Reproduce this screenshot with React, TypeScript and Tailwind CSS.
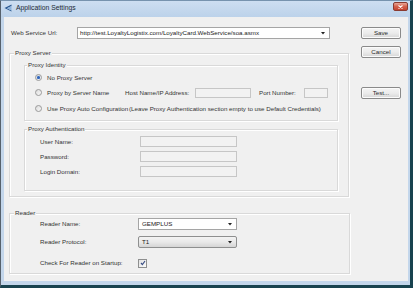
import React from "react";

function Radio({ checked }: { checked?: boolean }) {
  return (
    <span className="w-[7px] h-[7px] rounded-full border border-[#9a9a9a] bg-gradient-to-br from-[#dcdcdc] to-[#f8f8f8] flex items-center justify-center shrink-0">
      {checked ? <span className="w-[3px] h-[3px] rounded-full bg-[#2f63b8] shadow-[0_0_1px_#6a9be0]" /> : null}
    </span>
  );
}

function Box({ w, h }: { w: string; h: string }) {
  return <span className={`${w} ${h} block border border-[#c6c6c6] bg-[#f2f2f2] shrink-0`} />;
}

function Button({ label }: { label: string }) {
  return (
    <div className="w-[40px] h-[12px] rounded-[2px] border border-[#8a8a8a] bg-gradient-to-b from-[#f4f4f4] via-[#ececec] to-[#d6d6d6] flex items-center justify-center text-[#2a2a2a] shadow-[inset_0_0_0_1px_#fbfbfb]">
      {label}
    </div>
  );
}

function Arrow() {
  return (
    <svg width="4" height="3" viewBox="0 0 4 3" className="shrink-0">
      <path d="M0 0 L4 0 L2 2.5 Z" fill="#222" />
    </svg>
  );
}

export default function App() {
  return (
    <div className="w-[413px] h-[288px] flex flex-col bg-[#c3d6eb] border-l border-l-[#56616c] border-r-[3px] border-r-[#18434f] border-b-[3px] border-b-[#18434f] border-t border-t-[#7793ae] font-['Liberation_Sans',Arial,sans-serif] text-[6.2px] leading-[8px] text-[#333] overflow-hidden">
      {/* Title bar */}
      <div className="h-[16px] flex items-start bg-gradient-to-b from-[#cddef1] to-[#bcd2ea] shrink-0">
        <div className="h-[14px] flex items-center pl-[3px]">
          <svg width="8" height="8" viewBox="0 0 8 8" className="shrink-0">
            <path d="M0.5 4 L7.5 0.5 L7.5 2 L3 4.3 L7.5 6.5 L7.5 7.5 Z" fill="#2a5891" />
            <path d="M3 4.3 L7.5 2 L7.5 6.5 Z" fill="#8fb4dc" />
          </svg>
          <span className="ml-[4px] text-[6.8px] text-[#1e2a36]">Application Settings</span>
        </div>
        <div className="ml-auto mr-[2px] mt-[1px] w-[15px] h-[9px] rounded-[2px] border border-[#8a3a30] bg-gradient-to-b from-[#e9a596] via-[#d3614d] to-[#c4412e] flex items-center justify-center">
          <svg width="5" height="4" viewBox="0 0 5 4">
            <path d="M0.5 0.5 L4.5 3.5 M4.5 0.5 L0.5 3.5" stroke="#fff" strokeWidth="1.1" />
          </svg>
        </div>
      </div>

      {/* Client area */}
      <div className="ml-[3px] mr-[2px] h-[264px] bg-[#f0f0f0] flex items-start shrink-0">
        {/* Left column */}
        <div className="pl-[5px] flex flex-col">
          <div className="mt-[10px] h-[12px] flex items-center">
            <span className="pl-[2px] w-[68px] whitespace-nowrap">Web Service Url:</span>
            <div className="w-[253px] h-[12px] border border-[#a5a5a5] bg-white flex items-center pl-[2px] pr-[4px]">
              <span className="whitespace-nowrap text-[#1a1a1a]">http://test.LoyaltyLogistix.com/LoyaltyCard.WebService/soa.asmx</span>
              <span className="ml-auto">
                <Arrow />
              </span>
            </div>
          </div>

          {/* Proxy Server */}
          <fieldset className="mt-[10px] w-[340px] border border-[#d9d9d9] shadow-[inset_1px_1px_0_#ffffff,1px_1px_0_#ffffff]">
            <legend className="ml-[4px] px-[1px] leading-[8px] bg-[#f0f0f0]">Proxy Server</legend>
            <div className="pl-[14px] pb-[5px]">
              {/* Proxy Identity */}
              <fieldset className="mt-[4px] w-[314px] border border-[#d9d9d9] shadow-[inset_1px_1px_0_#ffffff,1px_1px_0_#ffffff]">
                <legend className="ml-[2px] px-[1px] leading-[8px] bg-[#f0f0f0]">Proxy Identity</legend>
                <div className="pl-[10px] pb-[6px]">
                  <div className="mt-[3px] h-[11px] flex items-center whitespace-nowrap">
                    <Radio checked />
                    <span className="ml-[5px]">No Proxy Server</span>
                  </div>
                  <div className="mt-[4px] h-[11px] flex items-center whitespace-nowrap">
                    <Radio />
                    <span className="ml-[5px] w-[78px]">Proxy by Server Name</span>
                    <span className="w-[70px]">Host Name/IP Address:</span>
                    <Box w="w-[56px]" h="h-[10px]" />
                    <span className="ml-[8px] w-[45px]">Port Number:</span>
                    <Box w="w-[24px]" h="h-[10px]" />
                  </div>
                  <div className="mt-[5px] h-[11px] flex items-center whitespace-nowrap">
                    <Radio />
                    <span className="ml-[5px] w-[82px] shrink-0">Use Proxy Auto Configuration</span>
                    <span>(Leave Proxy Authentication section empty to use Default Credentials)</span>
                  </div>
                </div>
              </fieldset>

              {/* Proxy Authentication */}
              <fieldset className="mt-[4px] w-[314px] border border-[#d9d9d9] shadow-[inset_1px_1px_0_#ffffff,1px_1px_0_#ffffff]">
                <legend className="ml-[2px] px-[1px] leading-[8px] bg-[#f0f0f0]">Proxy Authentication</legend>
                <div className="pl-[15px] pb-[13px]">
                  <div className="mt-[3px] h-[11px] flex items-center whitespace-nowrap">
                    <span className="w-[100px]">User Name:</span>
                    <Box w="w-[97px]" h="h-[11px]" />
                  </div>
                  <div className="mt-[4px] h-[11px] flex items-center whitespace-nowrap">
                    <span className="w-[100px]">Password:</span>
                    <Box w="w-[97px]" h="h-[11px]" />
                  </div>
                  <div className="mt-[4px] h-[11px] flex items-center whitespace-nowrap">
                    <span className="w-[100px]">Login Domain:</span>
                    <Box w="w-[97px]" h="h-[11px]" />
                  </div>
                </div>
              </fieldset>
            </div>
          </fieldset>

          {/* Reader */}
          <fieldset className="mt-[12px] w-[341px] border border-[#d9d9d9] shadow-[inset_1px_1px_0_#ffffff,1px_1px_0_#ffffff]">
            <legend className="ml-[4px] px-[1px] leading-[8px] bg-[#f0f0f0]">Reader</legend>
            <div className="pl-[30px] pb-[5px]">
              <div className="mt-[1px] h-[12px] flex items-center whitespace-nowrap">
                <span className="w-[98px]">Reader Name:</span>
                <div className="w-[99px] h-[12px] border border-[#a5a5a5] bg-white flex items-center pl-[3px] pr-[4px]">
                  <span className="text-[#1a1a1a]">GEMPLUS</span>
                  <span className="ml-auto">
                    <Arrow />
                  </span>
                </div>
              </div>
              <div className="mt-[6px] h-[12px] flex items-center whitespace-nowrap">
                <span className="w-[98px]">Reader Protocol:</span>
                <div className="w-[99px] h-[12px] rounded-[2px] border border-[#8e8f8f] bg-gradient-to-b from-[#f3f3f3] via-[#e9e9e9] to-[#d5d5d5] flex items-center pl-[3px] pr-[4px]">
                  <span className="text-[#1a1a1a]">T1</span>
                  <span className="ml-auto">
                    <Arrow />
                  </span>
                </div>
              </div>
              <div className="mt-[10px] h-[10px] flex items-center whitespace-nowrap">
                <span className="w-[98px]">Check For Reader on Startup:</span>
                <span className="w-[9px] h-[9px] border border-[#8e8f8f] bg-gradient-to-br from-[#e2e2e2] to-[#fbfbfb] flex items-center justify-center">
                  <svg width="6" height="6" viewBox="0 0 6 6">
                    <path d="M1 3 L2.4 4.6 L5 1" fill="none" stroke="#3b4f85" strokeWidth="1.2" />
                  </svg>
                </span>
              </div>
            </div>
          </fieldset>
        </div>

        {/* Right column */}
        <div className="ml-[11px] flex flex-col">
          <div className="mt-[10px]">
            <Button label="Save" />
          </div>
          <div className="mt-[7px]">
            <Button label="Cancel" />
          </div>
          <div className="mt-[29px]">
            <Button label="Test..." />
          </div>
        </div>
      </div>
    </div>
  );
}
